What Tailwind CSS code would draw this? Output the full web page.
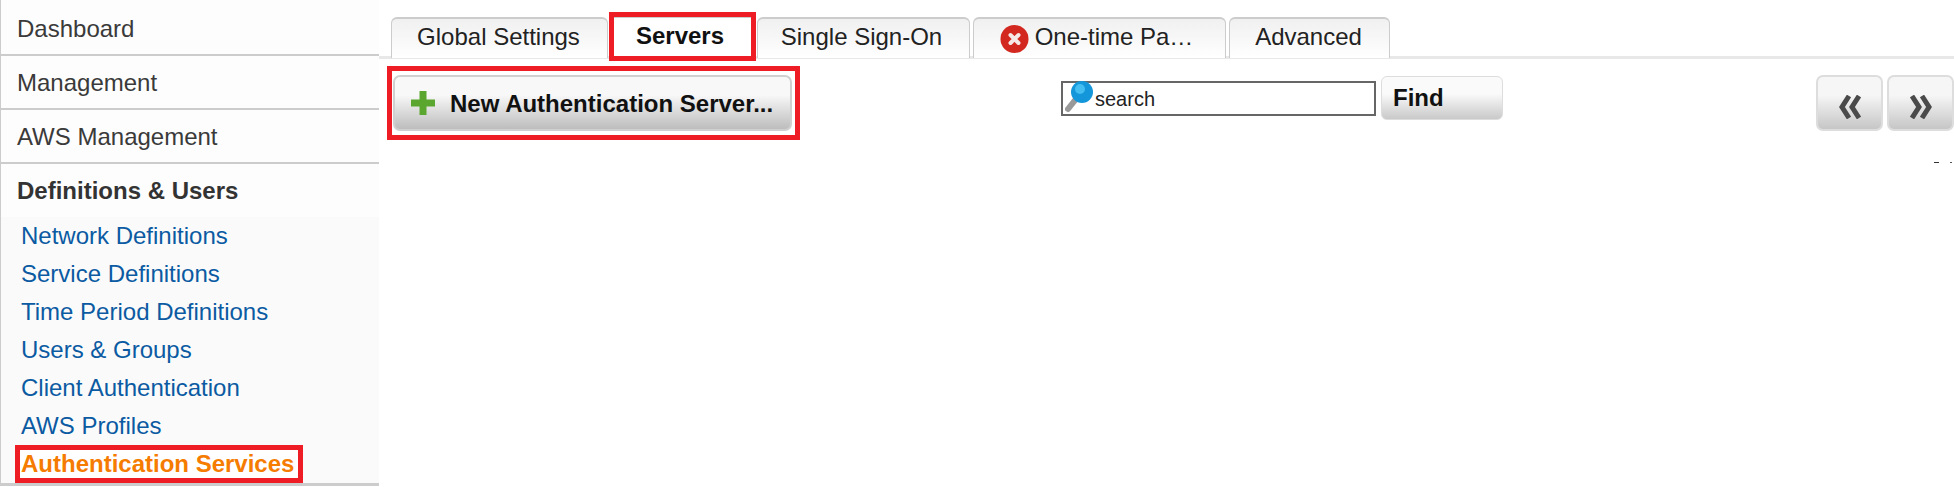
<!DOCTYPE html>
<html><head><script src="https://cdn.jsdelivr.net/npm/@tailwindcss/browser@4"></script></head>
<body class="bg-white font-['Liberation_Sans',Arial,sans-serif] overflow-hidden">
<div class="flex h-[487px] w-[1954px]">
  <aside class="w-[379px] shrink-0 border-l border-l-[#ccc] text-[24px] text-[#3a3a3a] h-[486px] flex flex-col">
    <div class="h-[56px] pl-[16px] pt-[3px] flex items-center border-b-2 border-[#ccc] bg-[#fdfdfd]">Dashboard</div>
    <div class="h-[54px] pl-[16px] pt-[1px] flex items-center border-b-2 border-[#ccc] bg-[#fdfdfd]">Management</div>
    <div class="h-[54px] pl-[16px] pt-[1px] flex items-center border-b-2 border-[#ccc] bg-[#fdfdfd]">AWS Management</div>
    <div class="h-[53px] pl-[16px] pt-[1px] flex items-center font-bold text-[#333] bg-[#fdfdfd]">Definitions &amp; Users</div>
    <ul class="flex-1 bg-[#fafafa] border-b-[3px] border-[#ccc] pl-[20px] text-[#0b5aa2] leading-[38px]">
      <li class="h-[38px]">Network Definitions</li>
      <li class="h-[38px]">Service Definitions</li>
      <li class="h-[38px]">Time Period Definitions</li>
      <li class="h-[38px]">Users &amp; Groups</li>
      <li class="h-[38px]">Client Authentication</li>
      <li class="h-[38px]">AWS Profiles</li>
      <li class="h-[38px]"><span class="inline-block h-[28px] leading-[28px] -ml-[1px] pl-[1px] pr-[4px] font-bold text-[#f57c00] bg-white outline-[5px] outline-[#ee1c25]">Authentication Services</span></li>
    </ul>
  </aside>
  <main class="flex-1 pt-[17px] min-w-0">
    <nav class="flex h-[42px] pl-[12px] gap-[3px] border-b-[3px] border-[#e8e8e8] text-[24px] text-[#222]">
      <div class="w-[217px] h-[41px] rounded-t-[6px] border border-b-0 border-[#ccc] border-t-2 bg-gradient-to-b from-[#f0f0f0] to-white flex items-center justify-center pb-[3px] pr-[2px]">Global Settings</div>
      <div class="w-[137px] ml-[3px] h-[39px] border-t border-[#ccc] bg-white font-bold text-[#111] flex items-center justify-center outline-[5px] outline-[#ee1c25] pb-[2px] pr-[5px]">Servers</div>
      <div class="w-[213px] ml-[3px] h-[41px] rounded-t-[6px] border border-b-0 border-[#ccc] border-t-2 bg-gradient-to-b from-[#f0f0f0] to-white flex items-center justify-center pb-[3px] pr-[4px]">Single Sign-On</div>
      <div class="w-[253px] h-[41px] rounded-t-[6px] border border-b-0 border-[#ccc] border-t-2 bg-gradient-to-b from-[#f0f0f0] to-white flex items-center justify-center gap-[6px] pb-[3px] pr-[6px]">
        <svg width="29" height="30" viewBox="0 0 29 30" class="mt-[3px]"><circle cx="14.5" cy="15" r="14" fill="#d3281f"/><path d="M10.500 11l8 8M18.500 11l-8 8" stroke="#f6e8e6" stroke-width="4" stroke-linecap="round"/></svg>
        <span>One-time Pa…</span>
      </div>
      <div class="w-[161px] h-[41px] rounded-t-[6px] border border-b-0 border-[#ccc] border-t-2 bg-gradient-to-b from-[#f0f0f0] to-white flex items-center justify-center pb-[3px] pr-[2px]">Advanced</div>
    </nav>
    <div class="relative flex items-start h-[80px] pt-[7px] pl-[8px]">
      <div class="w-[413px] h-[74px] border-[5px] border-[#ee1c25] pl-[1px] pr-[3px] pt-[4px] shrink-0">
        <button class="w-full h-[56px] rounded-[7px] border-2 border-[#d0d0d0] bg-gradient-to-b from-[#f8f8f8] from-35% to-[#bdbdbd] flex items-center gap-[13px] pl-[14px] font-bold text-[24px] text-[#111] whitespace-nowrap">
          <svg width="28" height="28" viewBox="0 0 28 28"><path d="M14 2v24M2 14h24" stroke="#5aa62e" stroke-width="7"/></svg>
          <span class="pt-[2px]">New Authentication Server...</span>
        </button>
      </div>
      <div class="ml-[261px] mt-[15px] w-[315px] h-[35px] border-2 border-[#666] bg-white flex items-center text-[20px] text-[#222]">
        <svg width="30" height="36" viewBox="0 0 30 36" class="shrink-0 ml-[2px] -mt-[2px]"><path d="M11 19L3 29" stroke="#999" stroke-width="6" stroke-linecap="round"/><circle cx="17" cy="12" r="11" fill="#1497da"/><circle cx="15" cy="9" r="5" fill="#44bdf0"/></svg>
        <span>search</span>
      </div>
      <button class="ml-[5px] mt-[10px] w-[122px] h-[44px] rounded-[6px] border border-[#ddd] bg-gradient-to-b from-[#fafafa] from-40% to-[#c9c9c9] font-bold text-[24px] text-[#111] text-left pl-[11px] pb-[1px]">Find</button>
      <div class="ml-auto mt-[9px] flex gap-[4px]">
        <button class="w-[67px] h-[56px] rounded-[7px] border-2 border-[#ddd] bg-gradient-to-b from-[#f6f6f6] from-35% to-[#c6c6c6] flex items-center justify-center">
          <svg width="22" height="24" viewBox="0 0 22 24" fill="none" stroke="#4a4a4a" stroke-width="5" class="mt-[8px]"><path d="M10 1L3 12l7 11M20 1l-7 11 7 11"/></svg>
        </button>
        <button class="w-[67px] h-[56px] rounded-[7px] border-2 border-[#ddd] bg-gradient-to-b from-[#f6f6f6] from-35% to-[#c6c6c6] flex items-center justify-center">
          <svg width="22" height="24" viewBox="0 0 22 24" fill="none" stroke="#4a4a4a" stroke-width="5" class="mt-[8px]"><path d="M12 1l7 11-7 11M2 1l7 11-7 11"/></svg>
        </button>
      </div>
      <span class="absolute left-[1555px] top-[103px] w-[5px] h-[1px] bg-[#333]"></span>
      <span class="absolute left-[1571px] top-[103px] w-[2px] h-[1px] bg-[#555]"></span>
    </div>
  </main>
</div>
</body></html>
